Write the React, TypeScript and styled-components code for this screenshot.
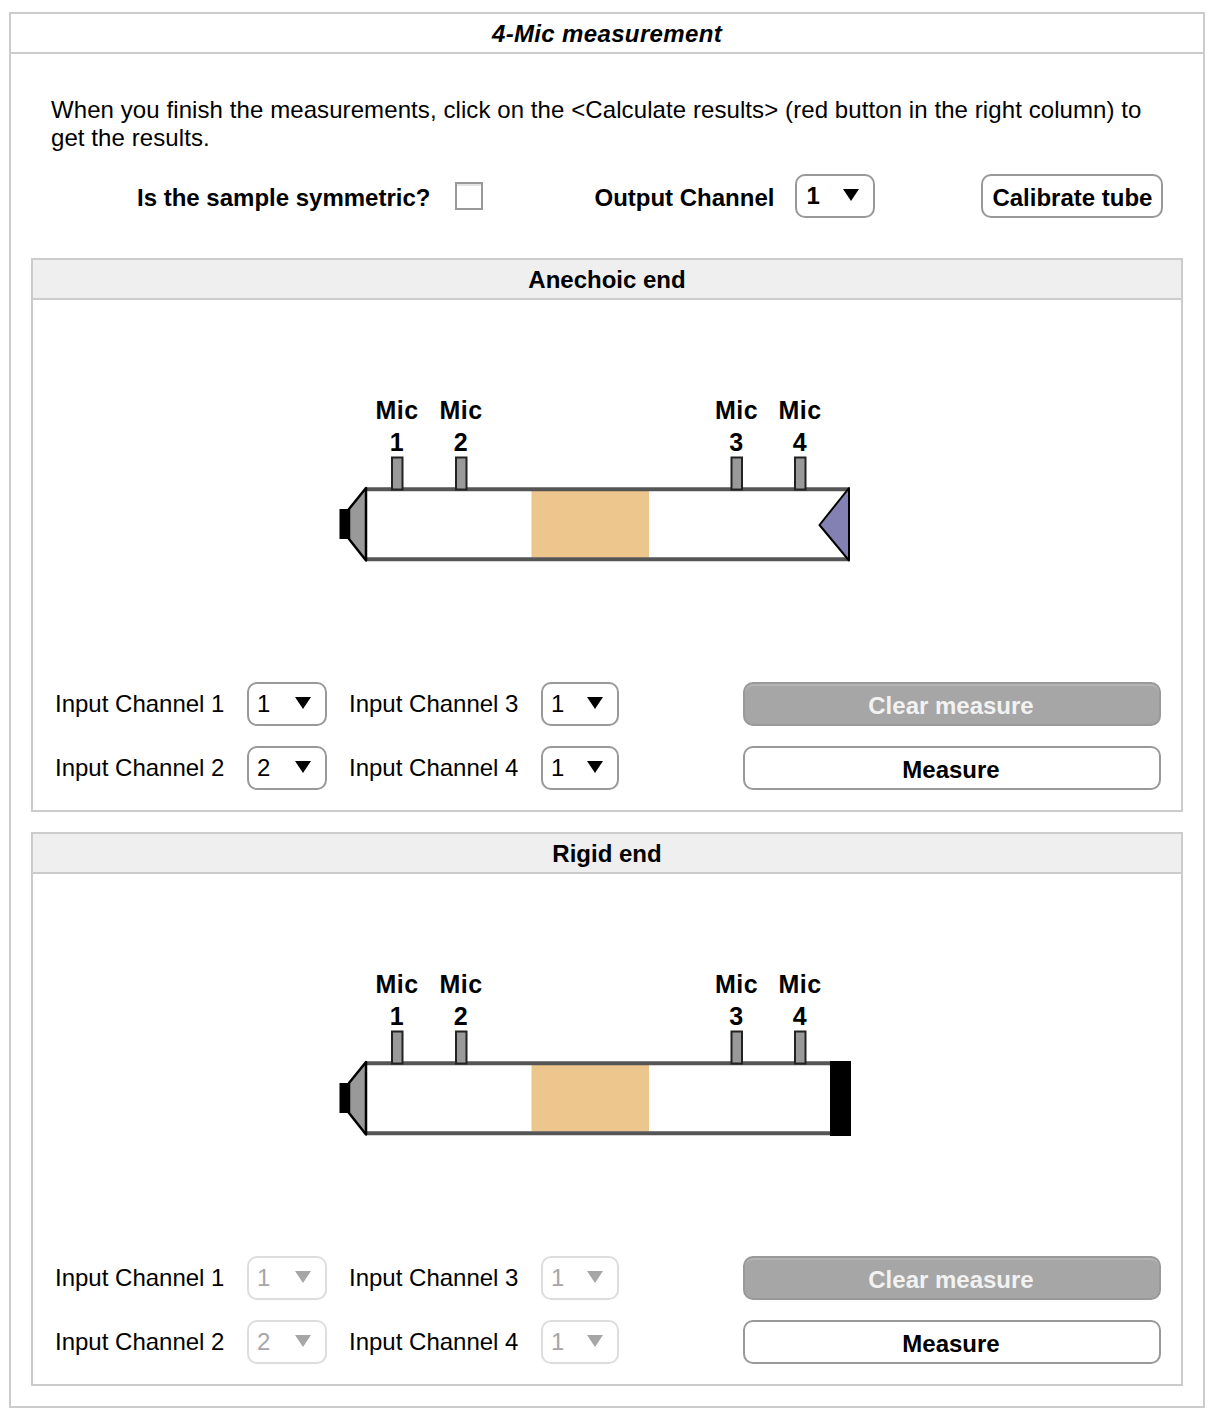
import React from 'react';
import styled, { createGlobalStyle } from 'styled-components';

const GlobalStyle = createGlobalStyle`
    html, body {
        margin: 0;
        padding: 0;
        background: #fff;
        color: #000;
        font-family: "Liberation Sans", Arial, sans-serif;
        font-size: 24px;
        line-height: 28px;
    }
`;

const Page = styled.div`
    box-sizing: border-box;
    width: 1196px;
    margin: 12px 0 13px 9px;
    border: 2px solid #ccc;
`;

const PageTitle = styled.div`
    height: 38px;
    line-height: 40px;
    text-align: center;
    font-weight: bold;
    font-style: italic;
    letter-spacing: 0.35px;
    border-bottom: 2px solid #ccc;
`;

const PageBody = styled.div`
    padding: 42px 20px 20px;
    display: flex;
    flex-direction: column;
`;

const Intro = styled.p`
    margin: 0 20px 22px;
    letter-spacing: 0.085px;
`;

const TopRow = styled.div`
    display: flex;
    align-items: center;
    height: 44px;
    margin-bottom: 40px;
`;

const BoldLabel = styled.span`
    font-weight: bold;
`;

const SymmetricLabel = styled(BoldLabel)`
    margin-left: 106px;
    margin-right: 25px;
    position: relative;
    top: 2px;
`;

const OutputLabel = styled(BoldLabel)`
    margin-left: 111px;
    margin-right: 21px;
    position: relative;
    top: 2px;
`;

const Checkbox = styled.span`
    box-sizing: border-box;
    display: block;
    width: 28px;
    height: 28px;
    border: 2px solid #999;
    box-shadow: inset 0 2px 0 #e4e4e4;
`;

const CalibrateButton = styled.div`
    box-sizing: border-box;
    width: 182px;
    height: 44px;
    margin-left: 106px;
    border: 2px solid #999;
    border-radius: 10px;
    font-weight: bold;
    line-height: 44px;
    text-align: center;
`;

const Panel = styled.section`
    border: 2px solid #ccc;
    & + & {
        margin-top: 20px;
    }
`;

const PanelHeader = styled.div`
    height: 38px;
    line-height: 40px;
    background: #efefef;
    border-bottom: 2px solid #ccc;
    text-align: center;
    font-weight: bold;
`;

const DiagramArea = styled.div`
    height: 382px;
    box-sizing: border-box;
    padding: 92px 0 0 305px;
`;

const DiagramSvg = styled.svg`
    display: block;
`;

const MicText = styled.text`
    font-family: "Liberation Sans", Arial, sans-serif;
    font-size: 25px;
    font-weight: bold;
    letter-spacing: 0.4px;
    text-anchor: middle;
`;

const Controls = styled.div`
    display: flex;
    justify-content: space-between;
    padding: 0 20px 20px 22px;
`;

const ChannelGrid = styled.div`
    display: grid;
    grid-template-columns: 192px 80px 214px 78px;
    grid-auto-rows: 44px;
    row-gap: 20px;
    align-items: center;
`;

const ChannelLabel = styled.span<{ $second?: boolean }>`
    padding-left: ${(p) => (p.$second ? '22px' : '0')};
`;

const SelectBox = styled.div<{ $disabled?: boolean; $bold?: boolean }>`
    box-sizing: border-box;
    height: 44px;
    width: ${(p) => (p.$bold ? '80px' : '100%')};
    display: flex;
    align-items: center;
    justify-content: space-between;
    padding: 0 14px 0 ${(p) => (p.$bold ? '9px' : '8px')};
    border: 2px solid ${(p) => (p.$disabled ? '#ddd' : '#999')};
    border-radius: 10px;
    color: ${(p) => (p.$disabled ? '#a6a6a6' : '#000')};
    font-weight: ${(p) => (p.$bold ? 'bold' : 'normal')};
`;

const Arrow = styled.span<{ $disabled?: boolean }>`
    width: 0;
    height: 0;
    border-left: 8px solid transparent;
    border-right: 8px solid transparent;
    border-top: 12px solid ${(p) => (p.$disabled ? '#a6a6a6' : '#000')};
    position: relative;
    top: -1px;
`;

const ActionColumn = styled.div`
    width: 418px;
    display: flex;
    flex-direction: column;
    gap: 20px;
`;

const ClearButton = styled.div`
    box-sizing: border-box;
    height: 44px;
    line-height: 44px;
    padding-right: 2px;
    text-align: center;
    font-weight: bold;
    color: #f2f2f2;
    background: #a6a6a6;
    border: 2px solid #999;
    border-radius: 10px;
    box-shadow: inset 0 2px 0 #b4b4b4;
`;

const MeasureButton = styled(ClearButton)`
    color: #000;
    background: #fff;
    box-shadow: none;
`;

const mics = [
    { id: 1, x: 397 },
    { id: 2, x: 461 },
    { id: 3, x: 736.5 },
    { id: 4, x: 800 },
];

function TubeDiagram({ end }: { end: 'anechoic' | 'rigid' }) {
    return (
        <DiagramSvg width={516} height={172} viewBox="338 392 516 172">
            <rect x="366" y="489" width="483" height="70" fill="#fff" />
            <rect x="531.5" y="491" width="117.5" height="66.5" fill="#ecc68c" />
            <path d="M366 489.3H849M366 559.3H849" stroke="#555" strokeWidth="4" fill="none" />
            <rect x="339.5" y="509" width="10" height="30" fill="#000" />
            <path d="M366 488V560.5L349 539V509Z" fill="#999" stroke="#000" strokeWidth="2.5" strokeLinejoin="round" />
            {mics.map((mic) => (
                <g key={mic.id}>
                    <MicText x={mic.x} y={419}>Mic</MicText>
                    <MicText x={mic.x} y={451}>{mic.id}</MicText>
                    <rect x={mic.x - 5} y="457.5" width="10.5" height="32" fill="#999" stroke="#222" strokeWidth="2" />
                </g>
            ))}
            {end === 'anechoic' ? (
                <path d="M849 488V560.5L819.5 525Z" fill="#8381b3" stroke="#000" strokeWidth="2" strokeLinejoin="round" />
            ) : (
                <rect x="830" y="487" width="21" height="75" fill="#000" />
            )}
        </DiagramSvg>
    );
}

function ChannelSelect({ value, disabled }: { value: number; disabled?: boolean }) {
    return (
        <SelectBox $disabled={disabled}>
            {value}
            <Arrow $disabled={disabled} />
        </SelectBox>
    );
}

function MeasurePanel({ title, end, disabled }: { title: string; end: 'anechoic' | 'rigid'; disabled?: boolean }) {
    return (
        <Panel>
            <PanelHeader>{title}</PanelHeader>
            <DiagramArea>
                <TubeDiagram end={end} />
            </DiagramArea>
            <Controls>
                <ChannelGrid>
                    <ChannelLabel>Input Channel 1</ChannelLabel>
                    <ChannelSelect value={1} disabled={disabled} />
                    <ChannelLabel $second>Input Channel 3</ChannelLabel>
                    <ChannelSelect value={1} disabled={disabled} />
                    <ChannelLabel>Input Channel 2</ChannelLabel>
                    <ChannelSelect value={2} disabled={disabled} />
                    <ChannelLabel $second>Input Channel 4</ChannelLabel>
                    <ChannelSelect value={1} disabled={disabled} />
                </ChannelGrid>
                <ActionColumn>
                    <ClearButton>Clear measure</ClearButton>
                    <MeasureButton>Measure</MeasureButton>
                </ActionColumn>
            </Controls>
        </Panel>
    );
}

export default function App() {
    return (
        <>
            <GlobalStyle />
            <Page>
                <PageTitle>4-Mic measurement</PageTitle>
                <PageBody>
                    <Intro>
                        When you finish the measurements, click on the &lt;Calculate results&gt; (red button in the right column) to get the results.
                    </Intro>
                    <TopRow>
                        <SymmetricLabel>Is the sample symmetric?</SymmetricLabel>
                        <Checkbox />
                        <OutputLabel>Output Channel</OutputLabel>
                        <SelectBox $bold>
                            1
                            <Arrow />
                        </SelectBox>
                        <CalibrateButton>Calibrate tube</CalibrateButton>
                    </TopRow>
                    <MeasurePanel title="Anechoic end" end="anechoic" />
                    <MeasurePanel title="Rigid end" end="rigid" disabled />
                </PageBody>
            </Page>
        </>
    );
}
